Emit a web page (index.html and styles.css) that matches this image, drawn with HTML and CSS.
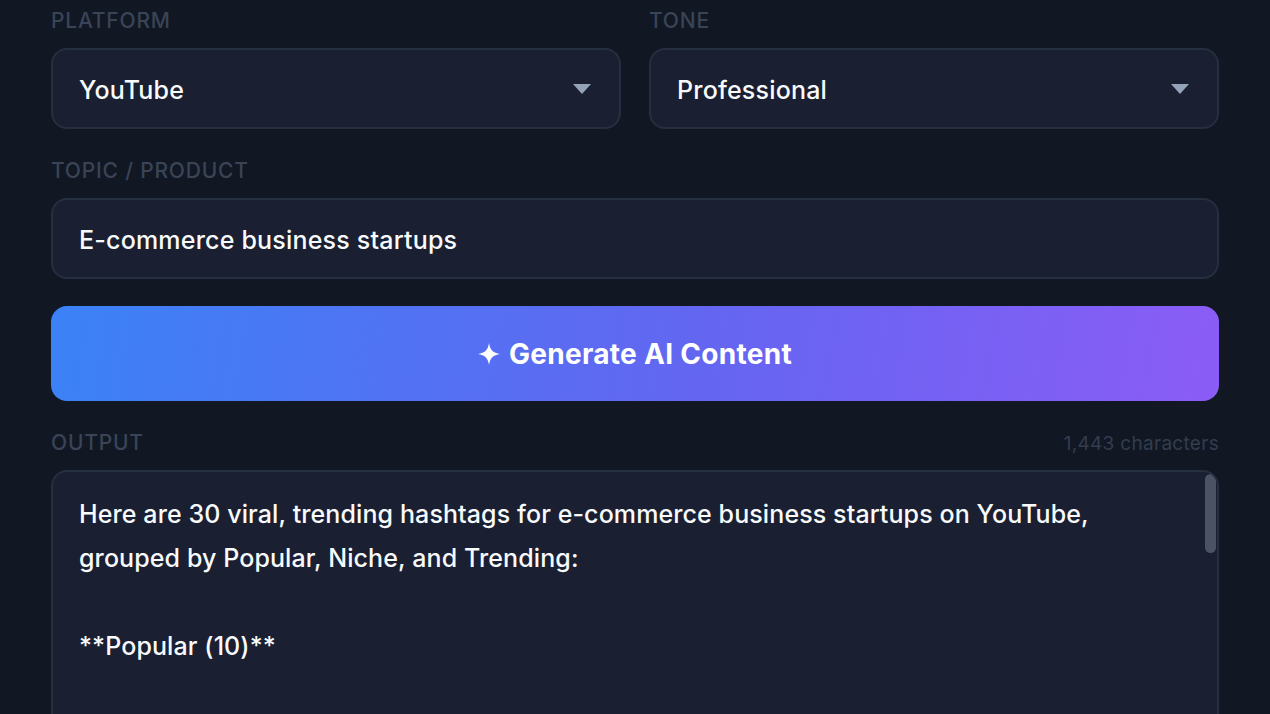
FILE: index.html
```html
<!DOCTYPE html>
<html lang="en">
<head>
<meta charset="utf-8">
<title>AI Content Generator</title>
<link rel="stylesheet" href="styles.css">
</head>
<body>
<main class="form">
  <div class="row">
    <div class="field">
      <label class="label">Platform</label>
      <div class="select">
        <span class="value">YouTube</span>
        <svg class="caret" width="18" height="10" viewBox="0 0 18 10"><path d="M0 0h18L9 10z" fill="#94a3b8"/></svg>
      </div>
    </div>
    <div class="field">
      <label class="label">Tone</label>
      <div class="select">
        <span class="value">Professional</span>
        <svg class="caret" width="18" height="10" viewBox="0 0 18 10"><path d="M0 0h18L9 10z" fill="#94a3b8"/></svg>
      </div>
    </div>
  </div>

  <div class="field">
    <label class="label">Topic / Product</label>
    <div class="input"><span class="value">E-commerce business startups</span></div>
  </div>

  <button class="generate" type="button">
    <svg class="spark" width="22" height="22" viewBox="0 0 24 24"><path d="M12 0C12.9 7.2 16.8 11.1 24 12 16.8 12.9 12.9 16.8 12 24 11.1 16.8 7.2 12.9 0 12 7.2 11.1 11.1 7.2 12 0z" fill="#fff"/></svg>
    <span>Generate AI Content</span>
  </button>

  <div class="field">
    <div class="output-head">
      <label class="label">Output</label>
      <span class="count">1,443 characters</span>
    </div>
    <div class="output">
      <div class="output-text">Here are 30 viral, trending hashtags for e-commerce business startups on YouTube,
grouped by Popular, Niche, and Trending:

**Popular (10)**</div>
      <div class="thumb"></div>
    </div>
  </div>
</main>
</body>
</html>
```

FILE: styles.css
```css
* { box-sizing: border-box; }

html, body {
  margin: 0;
  height: 100%;
  overflow: hidden;
}

body {
  background: #111723;
  font-family: Inter, "Noto Sans", sans-serif;
  color: #f1f5f9;
}

.form {
  padding: 6px 51px 0;
  display: flex;
  flex-direction: column;
  gap: 27px;
}

.row {
  display: grid;
  grid-template-columns: 1fr 1fr;
  gap: 28px;
}

.field {
  display: flex;
  flex-direction: column;
  gap: 12px;
}

.label {
  font-size: 21px;
  line-height: 30px;
  font-weight: 500;
  letter-spacing: 0.8px;
  text-transform: uppercase;
  color: #3a4457;
}

.select,
.input {
  height: 81px;
  border: 2px solid #262f40;
  border-radius: 16px;
  background: #1a2032;
  display: flex;
  align-items: center;
  justify-content: space-between;
  padding: 2px 28px 0 26px;
}

.value {
  font-size: 25px;
  font-weight: 500;
  color: #f8fafc;
  letter-spacing: 0.2px;
}

.caret { display: block; margin-top: -2px; }

.generate {
  height: 95px;
  border: 0;
  border-radius: 16px;
  background: linear-gradient(100deg, #3b82f6 0%, #6366f1 55%, #8b5cf6 100%);
  display: flex;
  align-items: center;
  justify-content: center;
  gap: 9px;
  font-family: inherit;
  font-size: 28px;
  font-weight: 700;
  color: #fff;
  letter-spacing: 0.3px;
  cursor: pointer;
}

.spark { display: block; }

.output-head {
  display: flex;
  justify-content: space-between;
  align-items: baseline;
}

.count {
  font-size: 19px;
  letter-spacing: 0.3px;
  color: #333d4f;
}

.output {
  position: relative;
  height: 300px;
  border: 2px solid #262f40;
  border-radius: 16px;
  background: #1a2032;
  overflow: hidden;
}

.output-text {
  padding: 20px 26px;
  white-space: pre-wrap;
  font-size: 25px;
  line-height: 44px;
  font-weight: 500;
  color: #f8fafc;
  letter-spacing: 0.1px;
}

/* scrollbar thumb drawn over the text area */
.thumb {
  position: absolute;
  top: 2px;
  right: 1px;
  width: 11px;
  height: 79px;
  border-radius: 6px;
  background: #4a5263;
}
```
